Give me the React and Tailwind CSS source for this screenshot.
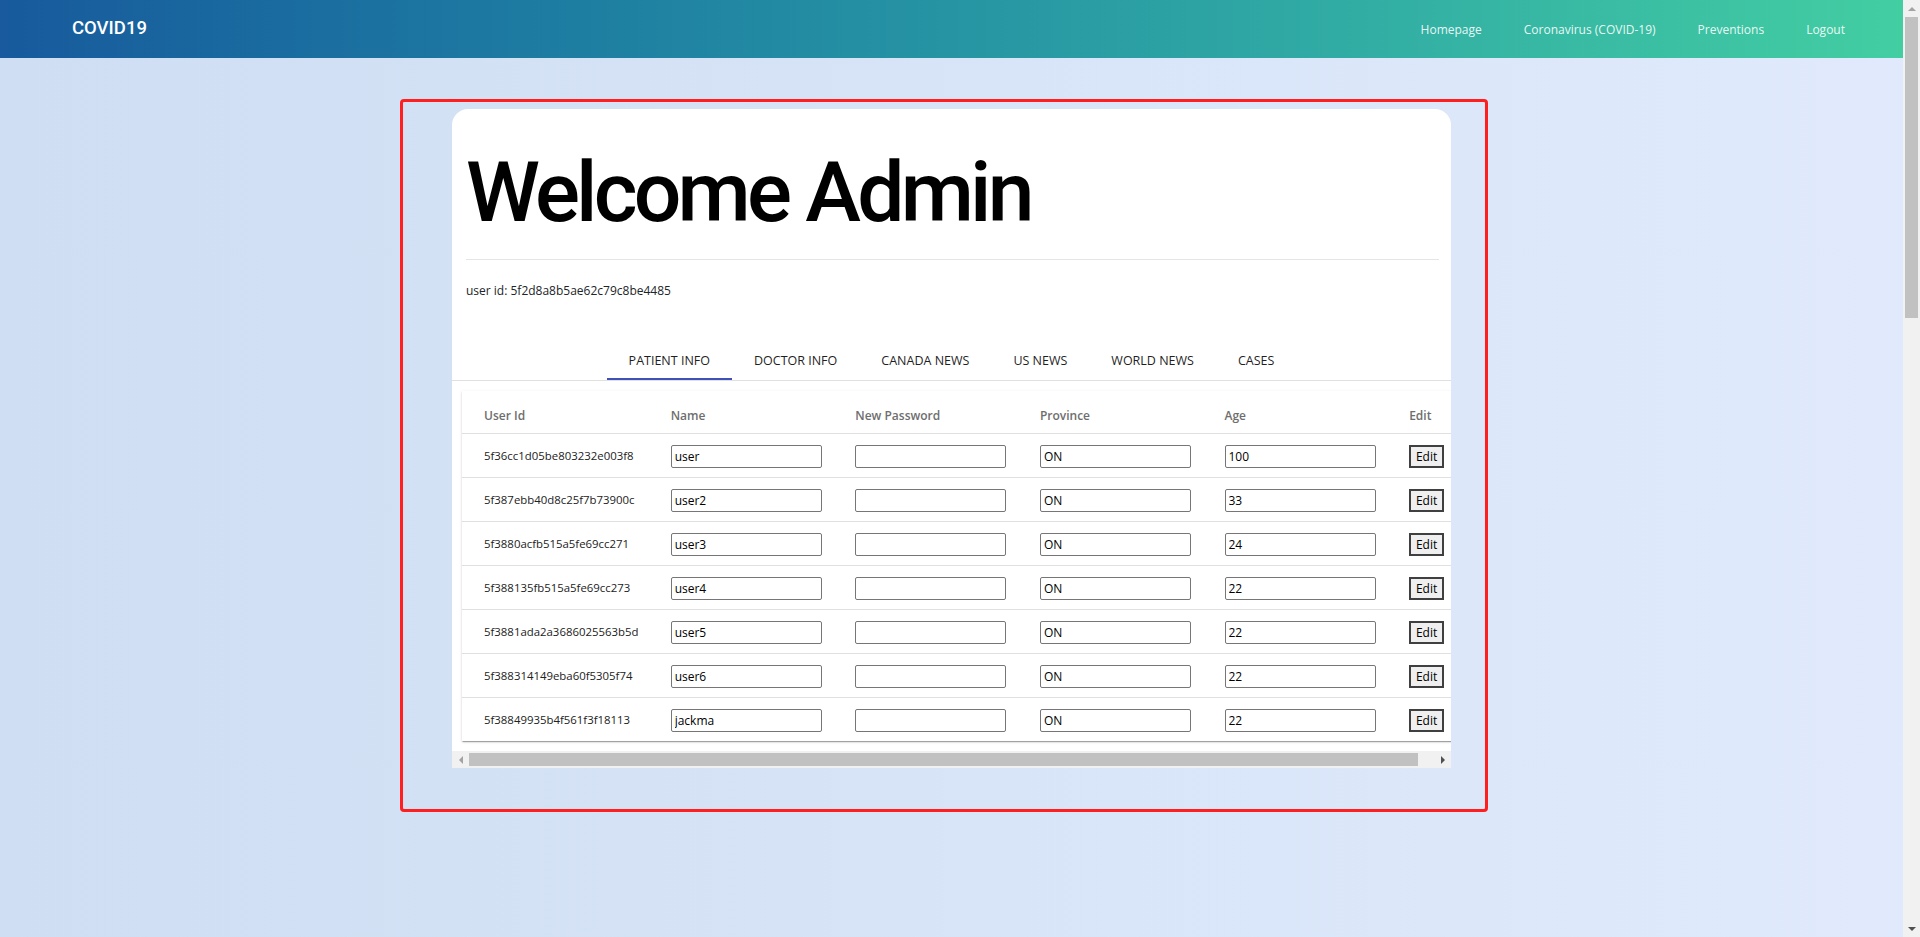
import React from "react";

const patients = [
  { id: "5f36cc1d05be803232e003f8", name: "user", province: "ON", age: "100" },
  { id: "5f387ebb40d8c25f7b73900c", name: "user2", province: "ON", age: "33" },
  { id: "5f3880acfb515a5fe69cc271", name: "user3", province: "ON", age: "24" },
  { id: "5f388135fb515a5fe69cc273", name: "user4", province: "ON", age: "22" },
  { id: "5f3881ada2a3686025563b5d", name: "user5", province: "ON", age: "22" },
  { id: "5f388314149eba60f5305f74", name: "user6", province: "ON", age: "22" },
  { id: "5f38849935b4f561f3f18113", name: "jackma", province: "ON", age: "22" },
];

const tabs = ["PATIENT INFO", "DOCTOR INFO", "CANADA NEWS", "US NEWS", "WORLD NEWS", "CASES"];
const links = ["Homepage", "Coronavirus (COVID-19)", "Preventions", "Logout"];

const Field = ({ value }) => (
  <input
    readOnly
    value={value}
    className="w-[151px] h-[23px] border border-[#767676] rounded-[2px] px-[3px] text-[12px] text-black bg-white outline-none font-['Open_Sans',sans-serif]"
  />
);

const Navbar = () => (
  <nav className="h-[58px] flex items-center justify-between bg-linear-to-r from-[#185a9d] to-[#43cea2] pl-[72px] pr-[58px]">
    <span className="font-['Roboto',sans-serif] font-medium text-[18.5px] text-white">COVID19</span>
    <div className="flex items-center gap-[42px] pt-[1px]">
      {links.map((l) => (
        <a key={l} className="text-[12px] text-[rgba(255,255,255,0.9)] cursor-pointer">
          {l}
        </a>
      ))}
    </div>
  </nav>
);

const PatientTable = () => (
  <div className="ml-[10px] mt-[10px] w-[1006px] bg-white shadow-[0_2px_1px_-1px_rgba(0,0,0,0.2),0_1px_1px_0_rgba(0,0,0,0.14),0_1px_3px_0_rgba(0,0,0,0.12)] pl-[22px]">
    <div className="flex h-[42px] items-center pt-[8px] text-[12px] font-semibold text-[#6e6e6e]">
      <div className="w-[187px]">User Id</div>
      <div className="w-[185px]">Name</div>
      <div className="w-[185px]">New Password</div>
      <div className="w-[185px]">Province</div>
      <div className="w-[185px]">Age</div>
      <div className="w-[59px]">Edit</div>
    </div>
    {patients.map((p) => (
      <div key={p.id} className="flex h-[44px] items-center border-t border-[#e0e0e0] -ml-[22px] pl-[22px]">
        <div className="w-[187px] text-[11.4px] text-[#222]">{p.id}</div>
        <div className="w-[185px]"><Field value={p.name} /></div>
        <div className="w-[185px]"><Field value="" /></div>
        <div className="w-[185px]"><Field value={p.province} /></div>
        <div className="w-[185px]"><Field value={p.age} /></div>
        <div className="w-[59px]">
          <button className="w-[35px] h-[23px] border-2 border-[#404040] bg-[#efefef] text-[12px] text-black leading-none">
            Edit
          </button>
        </div>
      </div>
    ))}
  </div>
);

const HScrollbar = () => (
  <div className="flex h-[17px] bg-[#f1f1f1]">
    <div className="w-[17px] flex items-center justify-center">
      <div className="w-0 h-0 border-y-[4px] border-y-transparent border-r-[4px] border-r-[#a3a3a3]" />
    </div>
    <div className="flex-1 py-[2px]">
      <div className="w-[949px] h-full bg-[#c1c1c1]" />
    </div>
    <div className="w-[17px] flex items-center justify-center">
      <div className="w-0 h-0 border-y-[4px] border-y-transparent border-l-[4px] border-l-[#505050]" />
    </div>
  </div>
);

const VScrollbar = () => (
  <div className="w-[17px] h-full bg-[#f1f1f1] flex flex-col shrink-0">
    <div className="h-[17px] flex items-center justify-center">
      <div className="w-0 h-0 border-x-[4px] border-x-transparent border-b-[4px] border-b-[#a3a3a3]" />
    </div>
    <div className="flex-1 px-[2px]">
      <div className="h-[301px] bg-[#c1c1c1]" />
    </div>
    <div className="h-[17px] flex items-center justify-center">
      <div className="w-0 h-0 border-x-[4px] border-x-transparent border-t-[4px] border-t-[#505050]" />
    </div>
  </div>
);

export default function App() {
  return (
    <div className="flex h-screen w-full overflow-hidden font-['Open_Sans',sans-serif]">
      <div className="flex-1 min-w-0 bg-linear-to-r from-[#cfdef3] to-[#e0eafc]">
        <Navbar />
        <div className="pt-[41px] pl-[400px]">
          <div className="w-[1088px] border-[3px] border-[#ff1f1f] rounded-[4px] pt-[7px] pl-[49px] pr-[34px] pb-[41px]">
            <div className="w-[999px] bg-white rounded-t-2xl overflow-hidden">
              <div className="pl-[14px] pr-[12px]">
                <h1 className="pt-[42px] font-['Roboto',sans-serif] font-medium text-[84px] leading-none tracking-[-3.8px] text-black">
                  Welcome Admin
                </h1>
                <hr className="mt-[24px] border-t border-[#e5e5e5]" />
                <p className="mt-[23px] text-[12px] leading-[16px] text-[#212529]">
                  user id: 5f2d8a8b5ae62c79c8be4485
                </p>
              </div>
              <div className="mt-[33px] flex justify-center border-b border-[#e0e0e0]">
                {tabs.map((t, i) => (
                  <div
                    key={t}
                    className={
                      i === 0
                        ? "h-[48px] px-[22px] pt-[13px] flex items-center text-[12.5px] text-[#1f1f1f] border-b-2 border-[#3f51b5]"
                        : "h-[48px] px-[22px] pt-[13px] flex items-center text-[12.5px] text-[#1f1f1f] border-b-2 border-transparent"
                    }
                  >
                    {t}
                  </div>
                ))}
              </div>
              <PatientTable />
              <div className="h-[10px]" />
              <HScrollbar />
            </div>
          </div>
        </div>
      </div>
      <VScrollbar />
    </div>
  );
}
